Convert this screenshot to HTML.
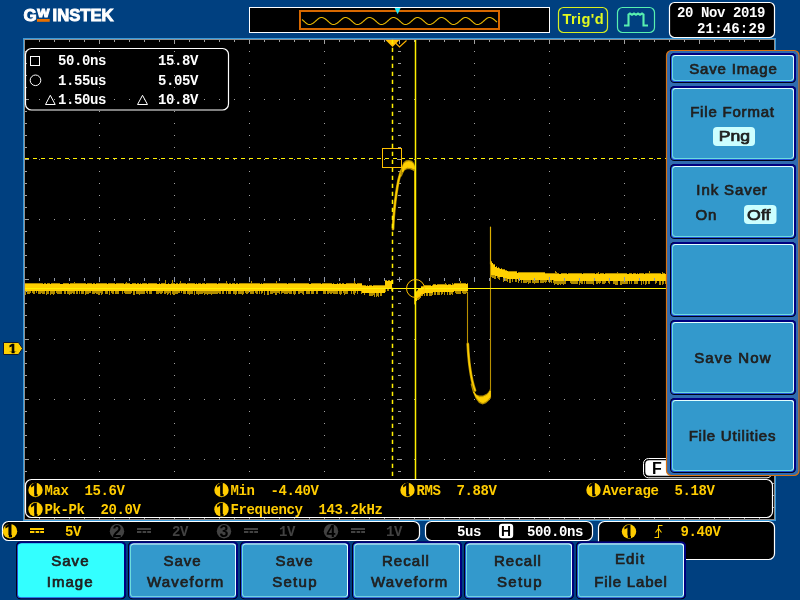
<!DOCTYPE html>
<html lang="en"><head><meta charset="utf-8"><title>GW Instek - Save Image</title>
<style>
html,body{margin:0;padding:0;background:#004080;}
body{width:800px;height:600px;overflow:hidden;position:relative}
svg{position:absolute;left:0;top:0;display:block}
.m{font-family:"Liberation Mono","DejaVu Sans Mono",monospace;font-weight:bold;font-size:14px;letter-spacing:-.4px;white-space:pre}
.s{font-family:"Liberation Sans",sans-serif;font-weight:normal;font-size:15px;fill:#202020;stroke:#202020;stroke-width:.7px}
</style></head><body>
<svg width="800" height="600" viewBox="0 0 800 600" style="will-change:transform">
<rect x="23" y="38" width="753" height="483" fill="#3a9ad9"/>
<rect x="24" y="39" width="751" height="481" fill="#909090"/>
<rect x="25" y="40" width="749" height="479" fill="#000"/>
<g fill="#a0a0a0" shape-rendering="crispEdges"><rect x="99" y="51" width="1" height="1"/><rect x="99" y="63" width="1" height="1"/><rect x="99" y="75" width="1" height="1"/><rect x="99" y="87" width="1" height="1"/><rect x="99" y="99" width="1" height="1"/><rect x="99" y="111" width="1" height="1"/><rect x="99" y="123" width="1" height="1"/><rect x="99" y="135" width="1" height="1"/><rect x="99" y="147" width="1" height="1"/><rect x="99" y="159" width="1" height="1"/><rect x="99" y="171" width="1" height="1"/><rect x="99" y="183" width="1" height="1"/><rect x="99" y="195" width="1" height="1"/><rect x="99" y="207" width="1" height="1"/><rect x="99" y="219" width="1" height="1"/><rect x="99" y="231" width="1" height="1"/><rect x="99" y="243" width="1" height="1"/><rect x="99" y="255" width="1" height="1"/><rect x="99" y="267" width="1" height="1"/><rect x="99" y="279" width="1" height="1"/><rect x="99" y="291" width="1" height="1"/><rect x="99" y="303" width="1" height="1"/><rect x="99" y="315" width="1" height="1"/><rect x="99" y="327" width="1" height="1"/><rect x="99" y="339" width="1" height="1"/><rect x="99" y="351" width="1" height="1"/><rect x="99" y="363" width="1" height="1"/><rect x="99" y="375" width="1" height="1"/><rect x="99" y="387" width="1" height="1"/><rect x="99" y="399" width="1" height="1"/><rect x="99" y="411" width="1" height="1"/><rect x="99" y="423" width="1" height="1"/><rect x="99" y="435" width="1" height="1"/><rect x="99" y="447" width="1" height="1"/><rect x="99" y="459" width="1" height="1"/><rect x="99" y="471" width="1" height="1"/><rect x="99" y="483" width="1" height="1"/><rect x="99" y="495" width="1" height="1"/><rect x="99" y="507" width="1" height="1"/><rect x="174" y="51" width="1" height="1"/><rect x="174" y="63" width="1" height="1"/><rect x="174" y="75" width="1" height="1"/><rect x="174" y="87" width="1" height="1"/><rect x="174" y="99" width="1" height="1"/><rect x="174" y="111" width="1" height="1"/><rect x="174" y="123" width="1" height="1"/><rect x="174" y="135" width="1" height="1"/><rect x="174" y="147" width="1" height="1"/><rect x="174" y="159" width="1" height="1"/><rect x="174" y="171" width="1" height="1"/><rect x="174" y="183" width="1" height="1"/><rect x="174" y="195" width="1" height="1"/><rect x="174" y="207" width="1" height="1"/><rect x="174" y="219" width="1" height="1"/><rect x="174" y="231" width="1" height="1"/><rect x="174" y="243" width="1" height="1"/><rect x="174" y="255" width="1" height="1"/><rect x="174" y="267" width="1" height="1"/><rect x="174" y="279" width="1" height="1"/><rect x="174" y="291" width="1" height="1"/><rect x="174" y="303" width="1" height="1"/><rect x="174" y="315" width="1" height="1"/><rect x="174" y="327" width="1" height="1"/><rect x="174" y="339" width="1" height="1"/><rect x="174" y="351" width="1" height="1"/><rect x="174" y="363" width="1" height="1"/><rect x="174" y="375" width="1" height="1"/><rect x="174" y="387" width="1" height="1"/><rect x="174" y="399" width="1" height="1"/><rect x="174" y="411" width="1" height="1"/><rect x="174" y="423" width="1" height="1"/><rect x="174" y="435" width="1" height="1"/><rect x="174" y="447" width="1" height="1"/><rect x="174" y="459" width="1" height="1"/><rect x="174" y="471" width="1" height="1"/><rect x="174" y="483" width="1" height="1"/><rect x="174" y="495" width="1" height="1"/><rect x="174" y="507" width="1" height="1"/><rect x="249" y="51" width="1" height="1"/><rect x="249" y="63" width="1" height="1"/><rect x="249" y="75" width="1" height="1"/><rect x="249" y="87" width="1" height="1"/><rect x="249" y="99" width="1" height="1"/><rect x="249" y="111" width="1" height="1"/><rect x="249" y="123" width="1" height="1"/><rect x="249" y="135" width="1" height="1"/><rect x="249" y="147" width="1" height="1"/><rect x="249" y="159" width="1" height="1"/><rect x="249" y="171" width="1" height="1"/><rect x="249" y="183" width="1" height="1"/><rect x="249" y="195" width="1" height="1"/><rect x="249" y="207" width="1" height="1"/><rect x="249" y="219" width="1" height="1"/><rect x="249" y="231" width="1" height="1"/><rect x="249" y="243" width="1" height="1"/><rect x="249" y="255" width="1" height="1"/><rect x="249" y="267" width="1" height="1"/><rect x="249" y="279" width="1" height="1"/><rect x="249" y="291" width="1" height="1"/><rect x="249" y="303" width="1" height="1"/><rect x="249" y="315" width="1" height="1"/><rect x="249" y="327" width="1" height="1"/><rect x="249" y="339" width="1" height="1"/><rect x="249" y="351" width="1" height="1"/><rect x="249" y="363" width="1" height="1"/><rect x="249" y="375" width="1" height="1"/><rect x="249" y="387" width="1" height="1"/><rect x="249" y="399" width="1" height="1"/><rect x="249" y="411" width="1" height="1"/><rect x="249" y="423" width="1" height="1"/><rect x="249" y="435" width="1" height="1"/><rect x="249" y="447" width="1" height="1"/><rect x="249" y="459" width="1" height="1"/><rect x="249" y="471" width="1" height="1"/><rect x="249" y="483" width="1" height="1"/><rect x="249" y="495" width="1" height="1"/><rect x="249" y="507" width="1" height="1"/><rect x="324" y="51" width="1" height="1"/><rect x="324" y="63" width="1" height="1"/><rect x="324" y="75" width="1" height="1"/><rect x="324" y="87" width="1" height="1"/><rect x="324" y="99" width="1" height="1"/><rect x="324" y="111" width="1" height="1"/><rect x="324" y="123" width="1" height="1"/><rect x="324" y="135" width="1" height="1"/><rect x="324" y="147" width="1" height="1"/><rect x="324" y="159" width="1" height="1"/><rect x="324" y="171" width="1" height="1"/><rect x="324" y="183" width="1" height="1"/><rect x="324" y="195" width="1" height="1"/><rect x="324" y="207" width="1" height="1"/><rect x="324" y="219" width="1" height="1"/><rect x="324" y="231" width="1" height="1"/><rect x="324" y="243" width="1" height="1"/><rect x="324" y="255" width="1" height="1"/><rect x="324" y="267" width="1" height="1"/><rect x="324" y="279" width="1" height="1"/><rect x="324" y="291" width="1" height="1"/><rect x="324" y="303" width="1" height="1"/><rect x="324" y="315" width="1" height="1"/><rect x="324" y="327" width="1" height="1"/><rect x="324" y="339" width="1" height="1"/><rect x="324" y="351" width="1" height="1"/><rect x="324" y="363" width="1" height="1"/><rect x="324" y="375" width="1" height="1"/><rect x="324" y="387" width="1" height="1"/><rect x="324" y="399" width="1" height="1"/><rect x="324" y="411" width="1" height="1"/><rect x="324" y="423" width="1" height="1"/><rect x="324" y="435" width="1" height="1"/><rect x="324" y="447" width="1" height="1"/><rect x="324" y="459" width="1" height="1"/><rect x="324" y="471" width="1" height="1"/><rect x="324" y="483" width="1" height="1"/><rect x="324" y="495" width="1" height="1"/><rect x="324" y="507" width="1" height="1"/><rect x="474" y="51" width="1" height="1"/><rect x="474" y="63" width="1" height="1"/><rect x="474" y="75" width="1" height="1"/><rect x="474" y="87" width="1" height="1"/><rect x="474" y="99" width="1" height="1"/><rect x="474" y="111" width="1" height="1"/><rect x="474" y="123" width="1" height="1"/><rect x="474" y="135" width="1" height="1"/><rect x="474" y="147" width="1" height="1"/><rect x="474" y="159" width="1" height="1"/><rect x="474" y="171" width="1" height="1"/><rect x="474" y="183" width="1" height="1"/><rect x="474" y="195" width="1" height="1"/><rect x="474" y="207" width="1" height="1"/><rect x="474" y="219" width="1" height="1"/><rect x="474" y="231" width="1" height="1"/><rect x="474" y="243" width="1" height="1"/><rect x="474" y="255" width="1" height="1"/><rect x="474" y="267" width="1" height="1"/><rect x="474" y="279" width="1" height="1"/><rect x="474" y="291" width="1" height="1"/><rect x="474" y="303" width="1" height="1"/><rect x="474" y="315" width="1" height="1"/><rect x="474" y="327" width="1" height="1"/><rect x="474" y="339" width="1" height="1"/><rect x="474" y="351" width="1" height="1"/><rect x="474" y="363" width="1" height="1"/><rect x="474" y="375" width="1" height="1"/><rect x="474" y="387" width="1" height="1"/><rect x="474" y="399" width="1" height="1"/><rect x="474" y="411" width="1" height="1"/><rect x="474" y="423" width="1" height="1"/><rect x="474" y="435" width="1" height="1"/><rect x="474" y="447" width="1" height="1"/><rect x="474" y="459" width="1" height="1"/><rect x="474" y="471" width="1" height="1"/><rect x="474" y="483" width="1" height="1"/><rect x="474" y="495" width="1" height="1"/><rect x="474" y="507" width="1" height="1"/><rect x="549" y="51" width="1" height="1"/><rect x="549" y="63" width="1" height="1"/><rect x="549" y="75" width="1" height="1"/><rect x="549" y="87" width="1" height="1"/><rect x="549" y="99" width="1" height="1"/><rect x="549" y="111" width="1" height="1"/><rect x="549" y="123" width="1" height="1"/><rect x="549" y="135" width="1" height="1"/><rect x="549" y="147" width="1" height="1"/><rect x="549" y="159" width="1" height="1"/><rect x="549" y="171" width="1" height="1"/><rect x="549" y="183" width="1" height="1"/><rect x="549" y="195" width="1" height="1"/><rect x="549" y="207" width="1" height="1"/><rect x="549" y="219" width="1" height="1"/><rect x="549" y="231" width="1" height="1"/><rect x="549" y="243" width="1" height="1"/><rect x="549" y="255" width="1" height="1"/><rect x="549" y="267" width="1" height="1"/><rect x="549" y="279" width="1" height="1"/><rect x="549" y="291" width="1" height="1"/><rect x="549" y="303" width="1" height="1"/><rect x="549" y="315" width="1" height="1"/><rect x="549" y="327" width="1" height="1"/><rect x="549" y="339" width="1" height="1"/><rect x="549" y="351" width="1" height="1"/><rect x="549" y="363" width="1" height="1"/><rect x="549" y="375" width="1" height="1"/><rect x="549" y="387" width="1" height="1"/><rect x="549" y="399" width="1" height="1"/><rect x="549" y="411" width="1" height="1"/><rect x="549" y="423" width="1" height="1"/><rect x="549" y="435" width="1" height="1"/><rect x="549" y="447" width="1" height="1"/><rect x="549" y="459" width="1" height="1"/><rect x="549" y="471" width="1" height="1"/><rect x="549" y="483" width="1" height="1"/><rect x="549" y="495" width="1" height="1"/><rect x="549" y="507" width="1" height="1"/><rect x="624" y="51" width="1" height="1"/><rect x="624" y="63" width="1" height="1"/><rect x="624" y="75" width="1" height="1"/><rect x="624" y="87" width="1" height="1"/><rect x="624" y="99" width="1" height="1"/><rect x="624" y="111" width="1" height="1"/><rect x="624" y="123" width="1" height="1"/><rect x="624" y="135" width="1" height="1"/><rect x="624" y="147" width="1" height="1"/><rect x="624" y="159" width="1" height="1"/><rect x="624" y="171" width="1" height="1"/><rect x="624" y="183" width="1" height="1"/><rect x="624" y="195" width="1" height="1"/><rect x="624" y="207" width="1" height="1"/><rect x="624" y="219" width="1" height="1"/><rect x="624" y="231" width="1" height="1"/><rect x="624" y="243" width="1" height="1"/><rect x="624" y="255" width="1" height="1"/><rect x="624" y="267" width="1" height="1"/><rect x="624" y="279" width="1" height="1"/><rect x="624" y="291" width="1" height="1"/><rect x="624" y="303" width="1" height="1"/><rect x="624" y="315" width="1" height="1"/><rect x="624" y="327" width="1" height="1"/><rect x="624" y="339" width="1" height="1"/><rect x="624" y="351" width="1" height="1"/><rect x="624" y="363" width="1" height="1"/><rect x="624" y="375" width="1" height="1"/><rect x="624" y="387" width="1" height="1"/><rect x="624" y="399" width="1" height="1"/><rect x="624" y="411" width="1" height="1"/><rect x="624" y="423" width="1" height="1"/><rect x="624" y="435" width="1" height="1"/><rect x="624" y="447" width="1" height="1"/><rect x="624" y="459" width="1" height="1"/><rect x="624" y="471" width="1" height="1"/><rect x="624" y="483" width="1" height="1"/><rect x="624" y="495" width="1" height="1"/><rect x="624" y="507" width="1" height="1"/><rect x="699" y="51" width="1" height="1"/><rect x="699" y="63" width="1" height="1"/><rect x="699" y="75" width="1" height="1"/><rect x="699" y="87" width="1" height="1"/><rect x="699" y="99" width="1" height="1"/><rect x="699" y="111" width="1" height="1"/><rect x="699" y="123" width="1" height="1"/><rect x="699" y="135" width="1" height="1"/><rect x="699" y="147" width="1" height="1"/><rect x="699" y="159" width="1" height="1"/><rect x="699" y="171" width="1" height="1"/><rect x="699" y="183" width="1" height="1"/><rect x="699" y="195" width="1" height="1"/><rect x="699" y="207" width="1" height="1"/><rect x="699" y="219" width="1" height="1"/><rect x="699" y="231" width="1" height="1"/><rect x="699" y="243" width="1" height="1"/><rect x="699" y="255" width="1" height="1"/><rect x="699" y="267" width="1" height="1"/><rect x="699" y="279" width="1" height="1"/><rect x="699" y="291" width="1" height="1"/><rect x="699" y="303" width="1" height="1"/><rect x="699" y="315" width="1" height="1"/><rect x="699" y="327" width="1" height="1"/><rect x="699" y="339" width="1" height="1"/><rect x="699" y="351" width="1" height="1"/><rect x="699" y="363" width="1" height="1"/><rect x="699" y="375" width="1" height="1"/><rect x="699" y="387" width="1" height="1"/><rect x="699" y="399" width="1" height="1"/><rect x="699" y="411" width="1" height="1"/><rect x="699" y="423" width="1" height="1"/><rect x="699" y="435" width="1" height="1"/><rect x="699" y="447" width="1" height="1"/><rect x="699" y="459" width="1" height="1"/><rect x="699" y="471" width="1" height="1"/><rect x="699" y="483" width="1" height="1"/><rect x="699" y="495" width="1" height="1"/><rect x="699" y="507" width="1" height="1"/><rect x="39" y="99" width="1" height="1"/><rect x="54" y="99" width="1" height="1"/><rect x="69" y="99" width="1" height="1"/><rect x="84" y="99" width="1" height="1"/><rect x="99" y="99" width="1" height="1"/><rect x="114" y="99" width="1" height="1"/><rect x="129" y="99" width="1" height="1"/><rect x="144" y="99" width="1" height="1"/><rect x="159" y="99" width="1" height="1"/><rect x="174" y="99" width="1" height="1"/><rect x="189" y="99" width="1" height="1"/><rect x="204" y="99" width="1" height="1"/><rect x="219" y="99" width="1" height="1"/><rect x="234" y="99" width="1" height="1"/><rect x="249" y="99" width="1" height="1"/><rect x="264" y="99" width="1" height="1"/><rect x="279" y="99" width="1" height="1"/><rect x="294" y="99" width="1" height="1"/><rect x="309" y="99" width="1" height="1"/><rect x="324" y="99" width="1" height="1"/><rect x="339" y="99" width="1" height="1"/><rect x="354" y="99" width="1" height="1"/><rect x="369" y="99" width="1" height="1"/><rect x="384" y="99" width="1" height="1"/><rect x="399" y="99" width="1" height="1"/><rect x="414" y="99" width="1" height="1"/><rect x="429" y="99" width="1" height="1"/><rect x="444" y="99" width="1" height="1"/><rect x="459" y="99" width="1" height="1"/><rect x="474" y="99" width="1" height="1"/><rect x="489" y="99" width="1" height="1"/><rect x="504" y="99" width="1" height="1"/><rect x="519" y="99" width="1" height="1"/><rect x="534" y="99" width="1" height="1"/><rect x="549" y="99" width="1" height="1"/><rect x="564" y="99" width="1" height="1"/><rect x="579" y="99" width="1" height="1"/><rect x="594" y="99" width="1" height="1"/><rect x="609" y="99" width="1" height="1"/><rect x="624" y="99" width="1" height="1"/><rect x="639" y="99" width="1" height="1"/><rect x="654" y="99" width="1" height="1"/><rect x="669" y="99" width="1" height="1"/><rect x="684" y="99" width="1" height="1"/><rect x="699" y="99" width="1" height="1"/><rect x="714" y="99" width="1" height="1"/><rect x="729" y="99" width="1" height="1"/><rect x="744" y="99" width="1" height="1"/><rect x="759" y="99" width="1" height="1"/><rect x="39" y="159" width="1" height="1"/><rect x="54" y="159" width="1" height="1"/><rect x="69" y="159" width="1" height="1"/><rect x="84" y="159" width="1" height="1"/><rect x="99" y="159" width="1" height="1"/><rect x="114" y="159" width="1" height="1"/><rect x="129" y="159" width="1" height="1"/><rect x="144" y="159" width="1" height="1"/><rect x="159" y="159" width="1" height="1"/><rect x="174" y="159" width="1" height="1"/><rect x="189" y="159" width="1" height="1"/><rect x="204" y="159" width="1" height="1"/><rect x="219" y="159" width="1" height="1"/><rect x="234" y="159" width="1" height="1"/><rect x="249" y="159" width="1" height="1"/><rect x="264" y="159" width="1" height="1"/><rect x="279" y="159" width="1" height="1"/><rect x="294" y="159" width="1" height="1"/><rect x="309" y="159" width="1" height="1"/><rect x="324" y="159" width="1" height="1"/><rect x="339" y="159" width="1" height="1"/><rect x="354" y="159" width="1" height="1"/><rect x="369" y="159" width="1" height="1"/><rect x="384" y="159" width="1" height="1"/><rect x="399" y="159" width="1" height="1"/><rect x="414" y="159" width="1" height="1"/><rect x="429" y="159" width="1" height="1"/><rect x="444" y="159" width="1" height="1"/><rect x="459" y="159" width="1" height="1"/><rect x="474" y="159" width="1" height="1"/><rect x="489" y="159" width="1" height="1"/><rect x="504" y="159" width="1" height="1"/><rect x="519" y="159" width="1" height="1"/><rect x="534" y="159" width="1" height="1"/><rect x="549" y="159" width="1" height="1"/><rect x="564" y="159" width="1" height="1"/><rect x="579" y="159" width="1" height="1"/><rect x="594" y="159" width="1" height="1"/><rect x="609" y="159" width="1" height="1"/><rect x="624" y="159" width="1" height="1"/><rect x="639" y="159" width="1" height="1"/><rect x="654" y="159" width="1" height="1"/><rect x="669" y="159" width="1" height="1"/><rect x="684" y="159" width="1" height="1"/><rect x="699" y="159" width="1" height="1"/><rect x="714" y="159" width="1" height="1"/><rect x="729" y="159" width="1" height="1"/><rect x="744" y="159" width="1" height="1"/><rect x="759" y="159" width="1" height="1"/><rect x="39" y="219" width="1" height="1"/><rect x="54" y="219" width="1" height="1"/><rect x="69" y="219" width="1" height="1"/><rect x="84" y="219" width="1" height="1"/><rect x="99" y="219" width="1" height="1"/><rect x="114" y="219" width="1" height="1"/><rect x="129" y="219" width="1" height="1"/><rect x="144" y="219" width="1" height="1"/><rect x="159" y="219" width="1" height="1"/><rect x="174" y="219" width="1" height="1"/><rect x="189" y="219" width="1" height="1"/><rect x="204" y="219" width="1" height="1"/><rect x="219" y="219" width="1" height="1"/><rect x="234" y="219" width="1" height="1"/><rect x="249" y="219" width="1" height="1"/><rect x="264" y="219" width="1" height="1"/><rect x="279" y="219" width="1" height="1"/><rect x="294" y="219" width="1" height="1"/><rect x="309" y="219" width="1" height="1"/><rect x="324" y="219" width="1" height="1"/><rect x="339" y="219" width="1" height="1"/><rect x="354" y="219" width="1" height="1"/><rect x="369" y="219" width="1" height="1"/><rect x="384" y="219" width="1" height="1"/><rect x="399" y="219" width="1" height="1"/><rect x="414" y="219" width="1" height="1"/><rect x="429" y="219" width="1" height="1"/><rect x="444" y="219" width="1" height="1"/><rect x="459" y="219" width="1" height="1"/><rect x="474" y="219" width="1" height="1"/><rect x="489" y="219" width="1" height="1"/><rect x="504" y="219" width="1" height="1"/><rect x="519" y="219" width="1" height="1"/><rect x="534" y="219" width="1" height="1"/><rect x="549" y="219" width="1" height="1"/><rect x="564" y="219" width="1" height="1"/><rect x="579" y="219" width="1" height="1"/><rect x="594" y="219" width="1" height="1"/><rect x="609" y="219" width="1" height="1"/><rect x="624" y="219" width="1" height="1"/><rect x="639" y="219" width="1" height="1"/><rect x="654" y="219" width="1" height="1"/><rect x="669" y="219" width="1" height="1"/><rect x="684" y="219" width="1" height="1"/><rect x="699" y="219" width="1" height="1"/><rect x="714" y="219" width="1" height="1"/><rect x="729" y="219" width="1" height="1"/><rect x="744" y="219" width="1" height="1"/><rect x="759" y="219" width="1" height="1"/><rect x="39" y="339" width="1" height="1"/><rect x="54" y="339" width="1" height="1"/><rect x="69" y="339" width="1" height="1"/><rect x="84" y="339" width="1" height="1"/><rect x="99" y="339" width="1" height="1"/><rect x="114" y="339" width="1" height="1"/><rect x="129" y="339" width="1" height="1"/><rect x="144" y="339" width="1" height="1"/><rect x="159" y="339" width="1" height="1"/><rect x="174" y="339" width="1" height="1"/><rect x="189" y="339" width="1" height="1"/><rect x="204" y="339" width="1" height="1"/><rect x="219" y="339" width="1" height="1"/><rect x="234" y="339" width="1" height="1"/><rect x="249" y="339" width="1" height="1"/><rect x="264" y="339" width="1" height="1"/><rect x="279" y="339" width="1" height="1"/><rect x="294" y="339" width="1" height="1"/><rect x="309" y="339" width="1" height="1"/><rect x="324" y="339" width="1" height="1"/><rect x="339" y="339" width="1" height="1"/><rect x="354" y="339" width="1" height="1"/><rect x="369" y="339" width="1" height="1"/><rect x="384" y="339" width="1" height="1"/><rect x="399" y="339" width="1" height="1"/><rect x="414" y="339" width="1" height="1"/><rect x="429" y="339" width="1" height="1"/><rect x="444" y="339" width="1" height="1"/><rect x="459" y="339" width="1" height="1"/><rect x="474" y="339" width="1" height="1"/><rect x="489" y="339" width="1" height="1"/><rect x="504" y="339" width="1" height="1"/><rect x="519" y="339" width="1" height="1"/><rect x="534" y="339" width="1" height="1"/><rect x="549" y="339" width="1" height="1"/><rect x="564" y="339" width="1" height="1"/><rect x="579" y="339" width="1" height="1"/><rect x="594" y="339" width="1" height="1"/><rect x="609" y="339" width="1" height="1"/><rect x="624" y="339" width="1" height="1"/><rect x="639" y="339" width="1" height="1"/><rect x="654" y="339" width="1" height="1"/><rect x="669" y="339" width="1" height="1"/><rect x="684" y="339" width="1" height="1"/><rect x="699" y="339" width="1" height="1"/><rect x="714" y="339" width="1" height="1"/><rect x="729" y="339" width="1" height="1"/><rect x="744" y="339" width="1" height="1"/><rect x="759" y="339" width="1" height="1"/><rect x="39" y="399" width="1" height="1"/><rect x="54" y="399" width="1" height="1"/><rect x="69" y="399" width="1" height="1"/><rect x="84" y="399" width="1" height="1"/><rect x="99" y="399" width="1" height="1"/><rect x="114" y="399" width="1" height="1"/><rect x="129" y="399" width="1" height="1"/><rect x="144" y="399" width="1" height="1"/><rect x="159" y="399" width="1" height="1"/><rect x="174" y="399" width="1" height="1"/><rect x="189" y="399" width="1" height="1"/><rect x="204" y="399" width="1" height="1"/><rect x="219" y="399" width="1" height="1"/><rect x="234" y="399" width="1" height="1"/><rect x="249" y="399" width="1" height="1"/><rect x="264" y="399" width="1" height="1"/><rect x="279" y="399" width="1" height="1"/><rect x="294" y="399" width="1" height="1"/><rect x="309" y="399" width="1" height="1"/><rect x="324" y="399" width="1" height="1"/><rect x="339" y="399" width="1" height="1"/><rect x="354" y="399" width="1" height="1"/><rect x="369" y="399" width="1" height="1"/><rect x="384" y="399" width="1" height="1"/><rect x="399" y="399" width="1" height="1"/><rect x="414" y="399" width="1" height="1"/><rect x="429" y="399" width="1" height="1"/><rect x="444" y="399" width="1" height="1"/><rect x="459" y="399" width="1" height="1"/><rect x="474" y="399" width="1" height="1"/><rect x="489" y="399" width="1" height="1"/><rect x="504" y="399" width="1" height="1"/><rect x="519" y="399" width="1" height="1"/><rect x="534" y="399" width="1" height="1"/><rect x="549" y="399" width="1" height="1"/><rect x="564" y="399" width="1" height="1"/><rect x="579" y="399" width="1" height="1"/><rect x="594" y="399" width="1" height="1"/><rect x="609" y="399" width="1" height="1"/><rect x="624" y="399" width="1" height="1"/><rect x="639" y="399" width="1" height="1"/><rect x="654" y="399" width="1" height="1"/><rect x="669" y="399" width="1" height="1"/><rect x="684" y="399" width="1" height="1"/><rect x="699" y="399" width="1" height="1"/><rect x="714" y="399" width="1" height="1"/><rect x="729" y="399" width="1" height="1"/><rect x="744" y="399" width="1" height="1"/><rect x="759" y="399" width="1" height="1"/><rect x="39" y="459" width="1" height="1"/><rect x="54" y="459" width="1" height="1"/><rect x="69" y="459" width="1" height="1"/><rect x="84" y="459" width="1" height="1"/><rect x="99" y="459" width="1" height="1"/><rect x="114" y="459" width="1" height="1"/><rect x="129" y="459" width="1" height="1"/><rect x="144" y="459" width="1" height="1"/><rect x="159" y="459" width="1" height="1"/><rect x="174" y="459" width="1" height="1"/><rect x="189" y="459" width="1" height="1"/><rect x="204" y="459" width="1" height="1"/><rect x="219" y="459" width="1" height="1"/><rect x="234" y="459" width="1" height="1"/><rect x="249" y="459" width="1" height="1"/><rect x="264" y="459" width="1" height="1"/><rect x="279" y="459" width="1" height="1"/><rect x="294" y="459" width="1" height="1"/><rect x="309" y="459" width="1" height="1"/><rect x="324" y="459" width="1" height="1"/><rect x="339" y="459" width="1" height="1"/><rect x="354" y="459" width="1" height="1"/><rect x="369" y="459" width="1" height="1"/><rect x="384" y="459" width="1" height="1"/><rect x="399" y="459" width="1" height="1"/><rect x="414" y="459" width="1" height="1"/><rect x="429" y="459" width="1" height="1"/><rect x="444" y="459" width="1" height="1"/><rect x="459" y="459" width="1" height="1"/><rect x="474" y="459" width="1" height="1"/><rect x="489" y="459" width="1" height="1"/><rect x="504" y="459" width="1" height="1"/><rect x="519" y="459" width="1" height="1"/><rect x="534" y="459" width="1" height="1"/><rect x="549" y="459" width="1" height="1"/><rect x="564" y="459" width="1" height="1"/><rect x="579" y="459" width="1" height="1"/><rect x="594" y="459" width="1" height="1"/><rect x="609" y="459" width="1" height="1"/><rect x="624" y="459" width="1" height="1"/><rect x="639" y="459" width="1" height="1"/><rect x="654" y="459" width="1" height="1"/><rect x="669" y="459" width="1" height="1"/><rect x="684" y="459" width="1" height="1"/><rect x="699" y="459" width="1" height="1"/><rect x="714" y="459" width="1" height="1"/><rect x="729" y="459" width="1" height="1"/><rect x="744" y="459" width="1" height="1"/><rect x="759" y="459" width="1" height="1"/><rect x="39" y="278" width="1" height="3"/><rect x="54" y="278" width="1" height="3"/><rect x="69" y="278" width="1" height="3"/><rect x="84" y="278" width="1" height="3"/><rect x="99" y="277" width="1" height="5"/><rect x="114" y="278" width="1" height="3"/><rect x="129" y="278" width="1" height="3"/><rect x="144" y="278" width="1" height="3"/><rect x="159" y="278" width="1" height="3"/><rect x="174" y="277" width="1" height="5"/><rect x="189" y="278" width="1" height="3"/><rect x="204" y="278" width="1" height="3"/><rect x="219" y="278" width="1" height="3"/><rect x="234" y="278" width="1" height="3"/><rect x="249" y="277" width="1" height="5"/><rect x="264" y="278" width="1" height="3"/><rect x="279" y="278" width="1" height="3"/><rect x="294" y="278" width="1" height="3"/><rect x="309" y="278" width="1" height="3"/><rect x="324" y="277" width="1" height="5"/><rect x="339" y="278" width="1" height="3"/><rect x="354" y="278" width="1" height="3"/><rect x="369" y="278" width="1" height="3"/><rect x="384" y="278" width="1" height="3"/><rect x="399" y="277" width="1" height="5"/><rect x="414" y="278" width="1" height="3"/><rect x="429" y="278" width="1" height="3"/><rect x="444" y="278" width="1" height="3"/><rect x="459" y="278" width="1" height="3"/><rect x="474" y="277" width="1" height="5"/><rect x="489" y="278" width="1" height="3"/><rect x="504" y="278" width="1" height="3"/><rect x="519" y="278" width="1" height="3"/><rect x="534" y="278" width="1" height="3"/><rect x="549" y="277" width="1" height="5"/><rect x="564" y="278" width="1" height="3"/><rect x="579" y="278" width="1" height="3"/><rect x="594" y="278" width="1" height="3"/><rect x="609" y="278" width="1" height="3"/><rect x="624" y="277" width="1" height="5"/><rect x="639" y="278" width="1" height="3"/><rect x="654" y="278" width="1" height="3"/><rect x="669" y="278" width="1" height="3"/><rect x="684" y="278" width="1" height="3"/><rect x="699" y="277" width="1" height="5"/><rect x="714" y="278" width="1" height="3"/><rect x="729" y="278" width="1" height="3"/><rect x="744" y="278" width="1" height="3"/><rect x="759" y="278" width="1" height="3"/><rect x="398" y="51" width="3" height="1"/><rect x="398" y="63" width="3" height="1"/><rect x="398" y="75" width="3" height="1"/><rect x="398" y="87" width="3" height="1"/><rect x="397" y="99" width="5" height="1"/><rect x="398" y="111" width="3" height="1"/><rect x="398" y="123" width="3" height="1"/><rect x="398" y="135" width="3" height="1"/><rect x="398" y="147" width="3" height="1"/><rect x="397" y="159" width="5" height="1"/><rect x="398" y="171" width="3" height="1"/><rect x="398" y="183" width="3" height="1"/><rect x="398" y="195" width="3" height="1"/><rect x="398" y="207" width="3" height="1"/><rect x="397" y="219" width="5" height="1"/><rect x="398" y="231" width="3" height="1"/><rect x="398" y="243" width="3" height="1"/><rect x="398" y="255" width="3" height="1"/><rect x="398" y="267" width="3" height="1"/><rect x="397" y="279" width="5" height="1"/><rect x="398" y="291" width="3" height="1"/><rect x="398" y="303" width="3" height="1"/><rect x="398" y="315" width="3" height="1"/><rect x="398" y="327" width="3" height="1"/><rect x="397" y="339" width="5" height="1"/><rect x="398" y="351" width="3" height="1"/><rect x="398" y="363" width="3" height="1"/><rect x="398" y="375" width="3" height="1"/><rect x="398" y="387" width="3" height="1"/><rect x="397" y="399" width="5" height="1"/><rect x="398" y="411" width="3" height="1"/><rect x="398" y="423" width="3" height="1"/><rect x="398" y="435" width="3" height="1"/><rect x="398" y="447" width="3" height="1"/><rect x="397" y="459" width="5" height="1"/><rect x="398" y="471" width="3" height="1"/><rect x="398" y="483" width="3" height="1"/><rect x="398" y="495" width="3" height="1"/><rect x="398" y="507" width="3" height="1"/><rect x="39" y="40" width="1" height="2"/><rect x="39" y="517" width="1" height="2"/><rect x="54" y="40" width="1" height="2"/><rect x="54" y="517" width="1" height="2"/><rect x="69" y="40" width="1" height="2"/><rect x="69" y="517" width="1" height="2"/><rect x="84" y="40" width="1" height="2"/><rect x="84" y="517" width="1" height="2"/><rect x="99" y="40" width="1" height="4"/><rect x="99" y="515" width="1" height="4"/><rect x="114" y="40" width="1" height="2"/><rect x="114" y="517" width="1" height="2"/><rect x="129" y="40" width="1" height="2"/><rect x="129" y="517" width="1" height="2"/><rect x="144" y="40" width="1" height="2"/><rect x="144" y="517" width="1" height="2"/><rect x="159" y="40" width="1" height="2"/><rect x="159" y="517" width="1" height="2"/><rect x="174" y="40" width="1" height="4"/><rect x="174" y="515" width="1" height="4"/><rect x="189" y="40" width="1" height="2"/><rect x="189" y="517" width="1" height="2"/><rect x="204" y="40" width="1" height="2"/><rect x="204" y="517" width="1" height="2"/><rect x="219" y="40" width="1" height="2"/><rect x="219" y="517" width="1" height="2"/><rect x="234" y="40" width="1" height="2"/><rect x="234" y="517" width="1" height="2"/><rect x="249" y="40" width="1" height="4"/><rect x="249" y="515" width="1" height="4"/><rect x="264" y="40" width="1" height="2"/><rect x="264" y="517" width="1" height="2"/><rect x="279" y="40" width="1" height="2"/><rect x="279" y="517" width="1" height="2"/><rect x="294" y="40" width="1" height="2"/><rect x="294" y="517" width="1" height="2"/><rect x="309" y="40" width="1" height="2"/><rect x="309" y="517" width="1" height="2"/><rect x="324" y="40" width="1" height="4"/><rect x="324" y="515" width="1" height="4"/><rect x="339" y="40" width="1" height="2"/><rect x="339" y="517" width="1" height="2"/><rect x="354" y="40" width="1" height="2"/><rect x="354" y="517" width="1" height="2"/><rect x="369" y="40" width="1" height="2"/><rect x="369" y="517" width="1" height="2"/><rect x="384" y="40" width="1" height="2"/><rect x="384" y="517" width="1" height="2"/><rect x="399" y="40" width="1" height="4"/><rect x="399" y="515" width="1" height="4"/><rect x="414" y="40" width="1" height="2"/><rect x="414" y="517" width="1" height="2"/><rect x="429" y="40" width="1" height="2"/><rect x="429" y="517" width="1" height="2"/><rect x="444" y="40" width="1" height="2"/><rect x="444" y="517" width="1" height="2"/><rect x="459" y="40" width="1" height="2"/><rect x="459" y="517" width="1" height="2"/><rect x="474" y="40" width="1" height="4"/><rect x="474" y="515" width="1" height="4"/><rect x="489" y="40" width="1" height="2"/><rect x="489" y="517" width="1" height="2"/><rect x="504" y="40" width="1" height="2"/><rect x="504" y="517" width="1" height="2"/><rect x="519" y="40" width="1" height="2"/><rect x="519" y="517" width="1" height="2"/><rect x="534" y="40" width="1" height="2"/><rect x="534" y="517" width="1" height="2"/><rect x="549" y="40" width="1" height="4"/><rect x="549" y="515" width="1" height="4"/><rect x="564" y="40" width="1" height="2"/><rect x="564" y="517" width="1" height="2"/><rect x="579" y="40" width="1" height="2"/><rect x="579" y="517" width="1" height="2"/><rect x="594" y="40" width="1" height="2"/><rect x="594" y="517" width="1" height="2"/><rect x="609" y="40" width="1" height="2"/><rect x="609" y="517" width="1" height="2"/><rect x="624" y="40" width="1" height="4"/><rect x="624" y="515" width="1" height="4"/><rect x="639" y="40" width="1" height="2"/><rect x="639" y="517" width="1" height="2"/><rect x="654" y="40" width="1" height="2"/><rect x="654" y="517" width="1" height="2"/><rect x="669" y="40" width="1" height="2"/><rect x="669" y="517" width="1" height="2"/><rect x="684" y="40" width="1" height="2"/><rect x="684" y="517" width="1" height="2"/><rect x="699" y="40" width="1" height="4"/><rect x="699" y="515" width="1" height="4"/><rect x="714" y="40" width="1" height="2"/><rect x="714" y="517" width="1" height="2"/><rect x="729" y="40" width="1" height="2"/><rect x="729" y="517" width="1" height="2"/><rect x="744" y="40" width="1" height="2"/><rect x="744" y="517" width="1" height="2"/><rect x="759" y="40" width="1" height="2"/><rect x="759" y="517" width="1" height="2"/><rect x="25" y="51" width="2" height="1"/><rect x="772" y="51" width="2" height="1"/><rect x="25" y="63" width="2" height="1"/><rect x="772" y="63" width="2" height="1"/><rect x="25" y="75" width="2" height="1"/><rect x="772" y="75" width="2" height="1"/><rect x="25" y="87" width="2" height="1"/><rect x="772" y="87" width="2" height="1"/><rect x="25" y="99" width="4" height="1"/><rect x="770" y="99" width="4" height="1"/><rect x="25" y="111" width="2" height="1"/><rect x="772" y="111" width="2" height="1"/><rect x="25" y="123" width="2" height="1"/><rect x="772" y="123" width="2" height="1"/><rect x="25" y="135" width="2" height="1"/><rect x="772" y="135" width="2" height="1"/><rect x="25" y="147" width="2" height="1"/><rect x="772" y="147" width="2" height="1"/><rect x="25" y="159" width="4" height="1"/><rect x="770" y="159" width="4" height="1"/><rect x="25" y="171" width="2" height="1"/><rect x="772" y="171" width="2" height="1"/><rect x="25" y="183" width="2" height="1"/><rect x="772" y="183" width="2" height="1"/><rect x="25" y="195" width="2" height="1"/><rect x="772" y="195" width="2" height="1"/><rect x="25" y="207" width="2" height="1"/><rect x="772" y="207" width="2" height="1"/><rect x="25" y="219" width="4" height="1"/><rect x="770" y="219" width="4" height="1"/><rect x="25" y="231" width="2" height="1"/><rect x="772" y="231" width="2" height="1"/><rect x="25" y="243" width="2" height="1"/><rect x="772" y="243" width="2" height="1"/><rect x="25" y="255" width="2" height="1"/><rect x="772" y="255" width="2" height="1"/><rect x="25" y="267" width="2" height="1"/><rect x="772" y="267" width="2" height="1"/><rect x="25" y="279" width="4" height="1"/><rect x="770" y="279" width="4" height="1"/><rect x="25" y="291" width="2" height="1"/><rect x="772" y="291" width="2" height="1"/><rect x="25" y="303" width="2" height="1"/><rect x="772" y="303" width="2" height="1"/><rect x="25" y="315" width="2" height="1"/><rect x="772" y="315" width="2" height="1"/><rect x="25" y="327" width="2" height="1"/><rect x="772" y="327" width="2" height="1"/><rect x="25" y="339" width="4" height="1"/><rect x="770" y="339" width="4" height="1"/><rect x="25" y="351" width="2" height="1"/><rect x="772" y="351" width="2" height="1"/><rect x="25" y="363" width="2" height="1"/><rect x="772" y="363" width="2" height="1"/><rect x="25" y="375" width="2" height="1"/><rect x="772" y="375" width="2" height="1"/><rect x="25" y="387" width="2" height="1"/><rect x="772" y="387" width="2" height="1"/><rect x="25" y="399" width="4" height="1"/><rect x="770" y="399" width="4" height="1"/><rect x="25" y="411" width="2" height="1"/><rect x="772" y="411" width="2" height="1"/><rect x="25" y="423" width="2" height="1"/><rect x="772" y="423" width="2" height="1"/><rect x="25" y="435" width="2" height="1"/><rect x="772" y="435" width="2" height="1"/><rect x="25" y="447" width="2" height="1"/><rect x="772" y="447" width="2" height="1"/><rect x="25" y="459" width="4" height="1"/><rect x="770" y="459" width="4" height="1"/><rect x="25" y="471" width="2" height="1"/><rect x="772" y="471" width="2" height="1"/><rect x="25" y="483" width="2" height="1"/><rect x="772" y="483" width="2" height="1"/><rect x="25" y="495" width="2" height="1"/><rect x="772" y="495" width="2" height="1"/><rect x="25" y="507" width="2" height="1"/><rect x="772" y="507" width="2" height="1"/></g>
<g shape-rendering="crispEdges" fill="none" stroke-width="1"><path transform="translate(.5 0)" stroke="#b08c00" d="M25 283V295M26 283V291M27 283V294M28 283V294M29 283V294M30 283V293M31 283V291M32 283V293M33 283V294M34 283V294M35 283V291M36 283V293M37 283V291M38 283V294M39 283V294M40 283V294M41 283V293M42 283V294M43 284V294M44 283V294M45 283V291M46 284V295M47 283V294M48 283V294M49 283V291M50 284V295M51 283V294M52 283V294M53 283V295M54 283V294M55 283V291M56 283V293M57 283V294M58 283V294M59 283V294M60 284V294M61 284V294M62 284V291M63 283V291M64 283V294M65 283V294M66 283V291M67 283V294M68 283V294M69 284V295M70 283V294M71 283V294M72 283V293M73 283V294M74 282V294M75 283V291M76 283V294M77 283V294M78 283V291M79 283V294M80 283V291M81 283V294M82 283V294M83 283V294M84 283V291M85 283V295M86 284V294M87 283V294M88 283V294M89 283V293M90 283V293M91 283V291M92 284V294M93 283V294M94 283V294M95 284V293M96 283V294M97 283V294M98 283V295M99 283V295M100 283V293M101 283V295M102 283V294M103 283V291M104 283V291M105 283V294M106 283V294M107 284V294M108 283V291M109 283V295M110 283V291M111 283V293M112 283V294M113 283V294M114 283V291M115 284V294M116 283V294M117 283V294M118 283V294M119 283V291M120 283V291M121 283V291M122 283V294M123 283V291M124 284V293M125 283V294M126 282V294M127 283V294M128 283V294M129 283V294M130 284V294M131 284V293M132 283V291M133 283V295M134 283V295M135 283V291M136 284V294M137 283V294M138 283V294M139 284V295M140 283V294M141 284V294M142 283V294M143 283V294M144 283V294M145 283V291M146 283V293M147 284V294M148 283V291M149 283V294M150 283V294M151 283V294M152 283V291M153 283V291M154 283V291M155 283V291M156 283V294M157 284V294M158 284V294M159 283V293M160 284V294M161 283V294M162 283V293M163 283V291M164 283V294M165 280V294M166 284V293M167 284V295M168 283V294M169 284V293M170 284V295M171 283V291M172 280V294M173 283V295M174 283V295M175 284V294M176 283V294M177 283V294M178 284V293M179 283V293M180 281V291M181 283V293M182 283V291M183 283V294M184 283V294M185 283V294M186 284V291M187 283V294M188 283V294M189 283V295M190 283V294M191 283V294M192 283V294M193 283V291M194 283V295M195 284V291M196 283V294M197 284V294M198 283V295M199 283V294M200 283V294M201 284V294M202 283V294M203 283V293M204 283V295M205 284V294M206 283V294M207 283V295M208 283V294M209 283V294M210 283V294M211 283V295M212 283V294M213 283V294M214 283V294M215 283V294M216 283V294M217 284V294M218 283V293M219 283V294M220 283V294M221 283V291M222 283V294M223 283V294M224 283V291M225 283V291M226 281V294M227 283V291M228 284V294M229 283V294M230 283V294M231 284V291M232 283V291M233 283V294M234 283V294M235 284V295M236 283V294M237 283V291M238 284V294M239 283V294M240 283V294M241 283V294M242 283V295M243 283V294M244 283V291M245 283V293M246 283V294M247 283V294M248 283V293M249 283V291M250 283V294M251 281V294M252 283V294M253 283V294M254 283V291M255 283V293M256 283V294M257 283V294M258 283V291M259 283V294M260 284V291M261 283V294M262 284V293M263 283V291M264 283V295M265 283V291M266 283V291M267 283V295M268 283V295M269 283V291M270 283V294M271 283V294M272 283V294M273 283V293M274 283V293M275 283V295M276 281V295M277 283V293M278 283V293M279 283V294M280 283V291M281 283V294M282 283V293M283 283V293M284 283V294M285 283V294M286 283V294M287 284V294M288 283V293M289 283V294M290 283V294M291 283V294M292 283V291M293 283V294M294 283V295M295 283V294M296 283V291M297 283V291M298 283V294M299 283V294M300 283V293M301 283V293M302 283V294M303 283V295M304 283V291M305 283V291M306 283V294M307 283V294M308 283V294M309 284V294M310 284V291M311 283V294M312 283V294M313 283V294M314 283V291M315 283V291M316 283V294M317 283V294M318 283V291M319 283V291M320 283V291M321 284V291M322 283V291M323 283V294M324 283V294M325 283V294M326 283V291M327 283V294M328 283V294M329 283V293M330 283V294M331 283V294M332 284V293M333 283V294M334 284V294M335 284V294M336 284V294M337 283V294M338 284V291M339 283V294M340 283V295M341 284V294M342 283V291M343 283V293M344 284V295M345 284V294M346 283V294M347 283V294M348 283V291M349 283V291M350 283V291M351 283V294M352 283V291M353 283V294M354 281V295M355 283V293M356 284V291M357 283V294M358 283V291M359 283V291M360 283V291M361 283V294M362 285V293M363 285V293M364 285V295M365 285V293M366 286V293M367 285V293M368 286V293M369 285V296M370 285V296M371 285V296M372 286V296M373 285V295M374 285V297M375 285V293M376 285V297M377 285V296M378 285V297M379 285V293M380 285V296M381 285V296M382 285V293M383 285V293M384 285V293M385 280V292M386 280V288M387 281V291M388 280V291M389 280V288M390 281V288M391 280V291M416 291V301M417 290V300M418 288V300M419 288V299M420 288V298M421 286V296M422 286V296M423 286V294M424 285V296M425 285V293M426 285V296M427 285V296M428 285V293M429 285V296M430 285V296M431 286V296M432 285V295M433 284V292M434 284V295M435 284V295M436 285V292M437 284V295M438 284V295M439 284V295M440 284V292M441 284V295M442 284V294M443 284V292M444 284V295M445 283V292M446 284V292M447 285V295M448 284V292M449 284V295M450 284V295M451 285V294M452 283V295M453 284V292M454 283V291M455 283V293M456 283V294M457 283V294M458 283V294M459 283V294M460 281V294M461 283V291M462 283V293M463 283V294M464 283V294M465 283V294M466 284V293M467 283V291M491 261V277M492 263V278M493 264V278M494 264V279M495 267V279M496 266V276M497 268V278M498 267V279M499 268V280M500 269V277M501 268V277M502 269V277M503 269V282M504 269V278M505 270V281M506 270V281M507 271V282M508 271V279M509 271V283M510 271V283M511 271V279M512 271V282M513 271V279M514 271V279M515 271V282M516 271V282M517 273V279M518 272V283M519 272V280M520 272V280M521 272V283M522 272V280M523 272V283M524 272V283M525 272V283M526 272V283M527 272V282M528 272V284M529 272V283M530 272V283M531 272V280M532 272V283M533 272V283M534 272V284M535 272V283M536 272V283M537 272V283M538 272V283M539 272V280M540 272V283M541 272V283M542 272V283M543 272V283M544 272V282M545 273V283M546 273V282M547 273V280M548 273V282M549 273V283M550 273V282M551 273V283M552 273V280M553 273V283M554 273V285M555 271V284M556 272V284M557 273V285M558 273V285M559 274V284M560 274V285M561 273V284M562 273V284M563 273V285M564 273V284M565 273V284M566 273V281M567 274V281M568 273V281M569 273V281M570 273V283M571 273V284M572 273V284M573 273V284M574 273V284M575 273V284M576 273V284M577 273V284M578 273V281M579 273V285M580 273V283M581 273V284M582 274V284M583 273V281M584 273V284M585 273V281M586 273V284M587 273V284M588 273V284M589 273V284M590 273V284M591 273V284M592 273V284M593 273V285M594 273V281M595 274V281M596 273V284M597 273V284M598 272V283M599 274V284M600 273V283M601 273V281M602 273V284M603 273V284M604 274V284M605 273V283M606 273V281M607 273V281M608 273V283M609 273V284M610 273V281M611 273V281M612 273V281M613 273V284M614 273V284M615 273V285M616 273V285M617 272V285M618 273V281M619 273V281M620 273V285M621 273V285M622 273V284M623 273V284M624 273V284M625 273V284M626 273V284M627 274V284M628 274V281M629 273V284M630 273V281M631 273V284M632 274V281M633 273V281M634 273V284M635 273V284M636 274V284M637 273V284M638 274V281M639 273V281M640 273V281M641 273V285M642 273V281M643 273V284M644 274V281M645 273V285M646 273V284M647 273V281M648 273V284M649 271V284M650 273V281M651 273V281M652 273V281M653 273V281M654 273V281M655 273V284M656 273V283M657 273V281M658 273V281M659 273V285M660 273V285M661 274V281M662 272V285M663 273V284M664 273V281M665 274V284M666 273V284"/><path transform="translate(.5 0)" stroke="#ffd000" d="M25 284V291M26 284V291M27 284V291M28 284V291M29 284V291M30 284V291M31 284V291M32 284V291M33 284V291M34 284V291M35 284V291M36 284V291M37 284V291M38 284V291M39 284V291M40 284V291M41 284V291M42 284V291M43 284V291M44 284V291M45 284V291M46 284V291M47 284V291M48 284V291M49 284V291M50 284V291M51 284V291M52 284V291M53 284V291M54 284V291M55 284V291M56 284V291M57 284V291M58 284V291M59 284V291M60 284V291M61 284V291M62 284V291M63 284V291M64 284V291M65 284V291M66 284V291M67 284V291M68 284V291M69 284V291M70 284V291M71 284V291M72 284V291M73 284V291M74 284V291M75 284V291M76 284V291M77 284V291M78 284V291M79 284V291M80 284V291M81 284V291M82 284V291M83 284V291M84 284V291M85 284V291M86 284V291M87 284V291M88 284V291M89 284V291M90 284V291M91 284V291M92 284V291M93 284V291M94 284V291M95 284V291M96 284V291M97 284V291M98 284V291M99 284V291M100 284V291M101 284V291M102 284V291M103 284V291M104 284V291M105 284V291M106 284V291M107 284V291M108 284V291M109 284V291M110 284V291M111 284V291M112 284V291M113 284V291M114 284V291M115 284V291M116 284V291M117 284V291M118 284V291M119 284V291M120 284V291M121 284V291M122 284V291M123 284V291M124 284V291M125 284V291M126 284V291M127 284V291M128 284V291M129 284V291M130 284V291M131 284V291M132 284V291M133 284V291M134 284V291M135 284V291M136 284V291M137 284V291M138 284V291M139 284V291M140 284V291M141 284V291M142 284V291M143 284V291M144 284V291M145 284V291M146 284V291M147 284V291M148 284V291M149 284V291M150 284V291M151 284V291M152 284V291M153 284V291M154 284V291M155 284V291M156 284V291M157 284V291M158 284V291M159 284V291M160 284V291M161 284V291M162 284V291M163 284V291M164 284V291M165 284V291M166 284V291M167 284V291M168 284V291M169 284V291M170 284V291M171 284V291M172 284V291M173 284V291M174 284V291M175 284V291M176 284V291M177 284V291M178 284V291M179 284V291M180 284V291M181 284V291M182 284V291M183 284V291M184 284V291M185 284V291M186 284V291M187 284V291M188 284V291M189 284V291M190 284V291M191 284V291M192 284V291M193 284V291M194 284V291M195 284V291M196 284V291M197 284V291M198 284V291M199 284V291M200 284V291M201 284V291M202 284V291M203 284V291M204 284V291M205 284V291M206 284V291M207 284V291M208 284V291M209 284V291M210 284V291M211 284V291M212 284V291M213 284V291M214 284V291M215 284V291M216 284V291M217 284V291M218 284V291M219 284V291M220 284V291M221 284V291M222 284V291M223 284V291M224 284V291M225 284V291M226 284V291M227 284V291M228 284V291M229 284V291M230 284V291M231 284V291M232 284V291M233 284V291M234 284V291M235 284V291M236 284V291M237 284V291M238 284V291M239 284V291M240 284V291M241 284V291M242 284V291M243 284V291M244 284V291M245 284V291M246 284V291M247 284V291M248 284V291M249 284V291M250 284V291M251 284V291M252 284V291M253 284V291M254 284V291M255 284V291M256 284V291M257 284V291M258 284V291M259 284V291M260 284V291M261 284V291M262 284V291M263 284V291M264 284V291M265 284V291M266 284V291M267 284V291M268 284V291M269 284V291M270 284V291M271 284V291M272 284V291M273 284V291M274 284V291M275 284V291M276 284V291M277 284V291M278 284V291M279 284V291M280 284V291M281 284V291M282 284V291M283 284V291M284 284V291M285 284V291M286 284V291M287 284V291M288 284V291M289 284V291M290 284V291M291 284V291M292 284V291M293 284V291M294 284V291M295 284V291M296 284V291M297 284V291M298 284V291M299 284V291M300 284V291M301 284V291M302 284V291M303 284V291M304 284V291M305 284V291M306 284V291M307 284V291M308 284V291M309 284V291M310 284V291M311 284V291M312 284V291M313 284V291M314 284V291M315 284V291M316 284V291M317 284V291M318 284V291M319 284V291M320 284V291M321 284V291M322 284V291M323 284V291M324 284V291M325 284V291M326 284V291M327 284V291M328 284V291M329 284V291M330 284V291M331 284V291M332 284V291M333 284V291M334 284V291M335 284V291M336 284V291M337 284V291M338 284V291M339 284V291M340 284V291M341 284V291M342 284V291M343 284V291M344 284V291M345 284V291M346 284V291M347 284V291M348 284V291M349 284V291M350 284V291M351 284V291M352 284V291M353 284V291M354 284V291M355 284V291M356 284V291M357 284V291M358 284V291M359 284V291M360 284V291M361 284V291M362 286V293M363 286V293M364 286V293M365 286V293M366 286V293M367 286V293M368 286V293M369 286V293M370 286V293M371 286V293M372 286V293M373 286V293M374 286V293M375 286V293M376 286V293M377 286V293M378 286V293M379 286V293M380 286V293M381 286V293M382 286V293M383 286V293M384 286V293M385 281V288M386 281V288M387 281V288M388 281V288M389 281V288M390 281V288M391 281V288M416 292V301M417 291V298M418 289V297M419 289V296M420 288V295M421 287V294M422 287V294M423 287V294M424 286V293M425 286V293M426 286V293M427 286V293M428 286V293M429 286V293M430 286V293M431 286V293M432 286V293M433 285V292M434 285V292M435 285V292M436 285V292M437 285V292M438 285V292M439 285V292M440 285V292M441 285V292M442 285V292M443 285V292M444 285V292M445 285V292M446 285V292M447 285V292M448 285V292M449 285V292M450 285V292M451 285V292M452 285V292M453 285V292M454 284V291M455 284V291M456 284V291M457 284V291M458 284V291M459 284V291M460 284V291M461 284V291M462 284V291M463 284V291M464 284V291M465 284V291M466 284V291M467 284V291M491 262V275M492 263V275M493 265V275M494 265V275M495 267V276M496 267V276M497 268V276M498 268V277M499 269V277M500 269V277M501 269V277M502 270V277M503 270V278M504 270V278M505 271V278M506 271V278M507 271V279M508 272V279M509 272V279M510 272V279M511 272V279M512 272V279M513 272V279M514 272V279M515 272V279M516 272V279M517 273V279M518 273V280M519 273V280M520 273V280M521 273V280M522 273V280M523 273V280M524 273V280M525 273V280M526 273V280M527 273V280M528 273V280M529 273V280M530 273V280M531 273V280M532 273V280M533 273V280M534 273V280M535 273V280M536 273V280M537 273V280M538 273V280M539 273V280M540 273V280M541 273V280M542 273V280M543 273V280M544 273V280M545 274V280M546 274V280M547 274V280M548 274V280M549 274V280M550 274V280M551 274V280M552 274V280M553 274V280M554 274V281M555 274V281M556 274V281M557 274V281M558 274V281M559 274V281M560 274V281M561 274V281M562 274V281M563 274V281M564 274V281M565 274V281M566 274V281M567 274V281M568 274V281M569 274V281M570 274V281M571 274V281M572 274V281M573 274V281M574 274V281M575 274V281M576 274V281M577 274V281M578 274V281M579 274V281M580 274V281M581 274V281M582 274V281M583 274V281M584 274V281M585 274V281M586 274V281M587 274V281M588 274V281M589 274V281M590 274V281M591 274V281M592 274V281M593 274V281M594 274V281M595 274V281M596 274V281M597 274V281M598 274V281M599 274V281M600 274V281M601 274V281M602 274V281M603 274V281M604 274V281M605 274V281M606 274V281M607 274V281M608 274V281M609 274V281M610 274V281M611 274V281M612 274V281M613 274V281M614 274V281M615 274V281M616 274V281M617 274V281M618 274V281M619 274V281M620 274V281M621 274V281M622 274V281M623 274V281M624 274V281M625 274V281M626 274V281M627 274V281M628 274V281M629 274V281M630 274V281M631 274V281M632 274V281M633 274V281M634 274V281M635 274V281M636 274V281M637 274V281M638 274V281M639 274V281M640 274V281M641 274V281M642 274V281M643 274V281M644 274V281M645 274V281M646 274V281M647 274V281M648 274V281M649 274V281M650 274V281M651 274V281M652 274V281M653 274V281M654 274V281M655 274V281M656 274V281M657 274V281M658 274V281M659 274V281M660 274V281M661 274V281M662 274V281M663 274V281M664 274V281M665 274V281M666 274V281"/></g>
<g fill="none" stroke-linecap="round" stroke-linejoin="round"><path d="M414.5 170V304" stroke="#c09800" stroke-width="1"/><path d="M467.5 292V346" stroke="#b89000" stroke-width="1.1"/><path d="M490.5 262V398" stroke="#b89000" stroke-width="1.1"/><path d="M490.5 227V264" stroke="#dcae00" stroke-width="1.2"/><path d="M393 229 C393.3 220 394 212 394.6 207 C395.6 198 397 188 398.6 180 C399.8 175 401 171 403 167" stroke="#b08c00" stroke-width="2.8"/><path d="M393 229 C393.3 220 394 212 394.6 207 C395.6 198 397 188 398.6 180 C399.8 175 401 171 403 167" stroke="#ffd000" stroke-width="1.5"/><path d="M400.2 174 L401.6 167 L403.4 162.3 L406 160.3 L409 160 L412 160.8 L414 163 L415 166 V172 L413 170.5 L410 169.3 L407 169.2 L404.6 170.6 L403 173.5 L401.6 177 Z" fill="#b08c00"/><path d="M402.2 168.5 L404 164 L406.4 162.2 L409 161.8 L411.6 162.4 L413.4 164.4 L414.2 167 V169 L411 167.4 L407.4 167.2 L404.6 168.6 L402.8 171.5 Z" fill="#ffd000" stroke="#ffd000" stroke-width="1"/><path d="M467.8 344 C468.2 352 468.8 360 469.8 367 C471 376 472.6 384 475 390.5" stroke="#b08c00" stroke-width="2.8"/><path d="M467.8 344 C468.2 352 468.8 360 469.8 367 C471 376 472.6 384 475 390.5" stroke="#ffd000" stroke-width="1.5"/><path d="M471.6 383 L473.6 390 L476 394.2 L479 395.6 L483 395.4 L487 393.6 L489.4 390.5 L491 385.5 V397.5 L489 400.6 L486 403.2 L482.6 404.6 L479 403 L475.6 398.6 L472.8 392 L470.6 384 Z" fill="#b08c00"/><path d="M474 392.5 L476.4 395.8 L479.4 397.4 L483 397.2 L487 395.4 L489.6 392.4 L490.2 391 V396.4 L488 399.6 L485.4 401.6 L482.6 402.6 L479.6 401.2 L476.6 397.6 Z" fill="#ffd000" stroke="#ffd000" stroke-width="1"/></g>
<g fill="#9098a8" shape-rendering="crispEdges"><rect x="39" y="278" width="1" height="3"/><rect x="54" y="278" width="1" height="3"/><rect x="69" y="278" width="1" height="3"/><rect x="84" y="278" width="1" height="3"/><rect x="99" y="277" width="1" height="5"/><rect x="114" y="278" width="1" height="3"/><rect x="129" y="278" width="1" height="3"/><rect x="144" y="278" width="1" height="3"/><rect x="159" y="278" width="1" height="3"/><rect x="174" y="277" width="1" height="5"/><rect x="189" y="278" width="1" height="3"/><rect x="204" y="278" width="1" height="3"/><rect x="219" y="278" width="1" height="3"/><rect x="234" y="278" width="1" height="3"/><rect x="249" y="277" width="1" height="5"/><rect x="264" y="278" width="1" height="3"/><rect x="279" y="278" width="1" height="3"/><rect x="294" y="278" width="1" height="3"/><rect x="309" y="278" width="1" height="3"/><rect x="324" y="277" width="1" height="5"/><rect x="339" y="278" width="1" height="3"/><rect x="354" y="278" width="1" height="3"/><rect x="369" y="278" width="1" height="3"/><rect x="384" y="278" width="1" height="3"/><rect x="399" y="277" width="1" height="5"/><rect x="414" y="278" width="1" height="3"/><rect x="429" y="278" width="1" height="3"/><rect x="444" y="278" width="1" height="3"/><rect x="459" y="278" width="1" height="3"/><rect x="474" y="277" width="1" height="5"/><rect x="489" y="278" width="1" height="3"/><rect x="504" y="278" width="1" height="3"/><rect x="519" y="278" width="1" height="3"/><rect x="534" y="278" width="1" height="3"/><rect x="549" y="277" width="1" height="5"/><rect x="564" y="278" width="1" height="3"/><rect x="579" y="278" width="1" height="3"/><rect x="594" y="278" width="1" height="3"/><rect x="609" y="278" width="1" height="3"/><rect x="624" y="277" width="1" height="5"/><rect x="639" y="278" width="1" height="3"/><rect x="654" y="278" width="1" height="3"/><rect x="669" y="278" width="1" height="3"/><rect x="684" y="278" width="1" height="3"/><rect x="699" y="277" width="1" height="5"/><rect x="714" y="278" width="1" height="3"/><rect x="729" y="278" width="1" height="3"/><rect x="744" y="278" width="1" height="3"/><rect x="759" y="278" width="1" height="3"/></g>
<path d="M385.5 40H399.5L392.5 47Z" fill="#ffc000"/>
<path d="M393 40.5L399.5 47L406.5 40.5" fill="none" stroke="#ffb400" stroke-width="1.1"/>
<g fill="none" stroke="#fff000"><path d="M25 288.5H667" stroke-width="1" shape-rendering="crispEdges"/><path d="M415.5 40V479" stroke-width="1.5"/><path d="M25 158.5H667" stroke-width="1" stroke-dasharray="4 4" shape-rendering="crispEdges"/><path d="M392.5 39.8V479" stroke-width="1.5" stroke-dasharray="4.3 3.7"/></g>
<rect x="382.5" y="148.5" width="19" height="19" fill="none" stroke="#ffc000" stroke-width="1" shape-rendering="crispEdges"/>
<circle cx="415.5" cy="288.5" r="9" fill="none" stroke="#ffc000" stroke-width="1"/>
<g fill="#fff" stroke="#fff" stroke-width=".9" stroke-linejoin="miter" font-family="'Liberation Sans',sans-serif" font-weight="bold"><text x="23.4" y="21.2" font-size="16px" textLength="13.2" lengthAdjust="spacingAndGlyphs">G</text><text x="37.3" y="17.1" font-size="10.4px" textLength="12.2" lengthAdjust="spacingAndGlyphs">W</text><text x="52.6" y="21.2" font-size="16px" textLength="61" lengthAdjust="spacingAndGlyphs">INSTEK</text></g>
<rect x="37" y="19" width="12.7" height="2.8" fill="#e87000"/>
<rect x="249.5" y="7.5" width="300" height="25" fill="#000" stroke="#fff" stroke-width="1" shape-rendering="crispEdges"/>
<rect x="300" y="11" width="199" height="18" fill="none" stroke="#d86800" stroke-width="2" shape-rendering="crispEdges"/>
<path d="M302.0 19.49 L303.0 20.36 L304.0 21.27 L305.0 22.17 L306.0 22.98 L307.0 23.66 L308.0 24.16 L309.0 24.44 L310.0 24.49 L311.0 24.30 L312.0 23.88 L313.0 23.27 L314.0 22.51 L315.0 21.64 L316.0 20.73 L317.0 19.83 L318.0 19.02 L319.0 18.34 L320.0 17.84 L321.0 17.56 L322.0 17.51 L323.0 17.70 L324.0 18.12 L325.0 18.73 L326.0 19.49 L327.0 20.36 L328.0 21.27 L329.0 22.17 L330.0 22.98 L331.0 23.66 L332.0 24.16 L333.0 24.44 L334.0 24.49 L335.0 24.30 L336.0 23.88 L337.0 23.27 L338.0 22.51 L339.0 21.64 L340.0 20.73 L341.0 19.83 L342.0 19.02 L343.0 18.34 L344.0 17.84 L345.0 17.56 L346.0 17.51 L347.0 17.70 L348.0 18.12 L349.0 18.73 L350.0 19.49 L351.0 20.36 L352.0 21.27 L353.0 22.17 L354.0 22.98 L355.0 23.66 L356.0 24.16 L357.0 24.44 L358.0 24.49 L359.0 24.30 L360.0 23.88 L361.0 23.27 L362.0 22.51 L363.0 21.64 L364.0 20.73 L365.0 19.83 L366.0 19.02 L367.0 18.34 L368.0 17.84 L369.0 17.56 L370.0 17.51 L371.0 17.70 L372.0 18.12 L373.0 18.73 L374.0 19.49 L375.0 20.36 L376.0 21.27 L377.0 22.17 L378.0 22.98 L379.0 23.66 L380.0 24.16 L381.0 24.44 L382.0 24.49 L383.0 24.30 L384.0 23.88 L385.0 23.27 L386.0 22.51 L387.0 21.64 L388.0 20.73 L389.0 19.83 L390.0 19.02 L391.0 18.34 L392.0 17.84 L393.0 17.56 L394.0 17.51 L395.0 17.70 L396.0 18.12 L397.0 18.73 L398.0 19.49 L399.0 20.36 L400.0 21.27 L401.0 22.17 L402.0 22.98 L403.0 23.66 L404.0 24.16 L405.0 24.44 L406.0 24.49 L407.0 24.30 L408.0 23.88 L409.0 23.27 L410.0 22.51 L411.0 21.64 L412.0 20.73 L413.0 19.83 L414.0 19.02 L415.0 18.34 L416.0 17.84 L417.0 17.56 L418.0 17.51 L419.0 17.70 L420.0 18.12 L421.0 18.73 L422.0 19.49 L423.0 20.36 L424.0 21.27 L425.0 22.17 L426.0 22.98 L427.0 23.66 L428.0 24.16 L429.0 24.44 L430.0 24.49 L431.0 24.30 L432.0 23.88 L433.0 23.27 L434.0 22.51 L435.0 21.64 L436.0 20.73 L437.0 19.83 L438.0 19.02 L439.0 18.34 L440.0 17.84 L441.0 17.56 L442.0 17.51 L443.0 17.70 L444.0 18.12 L445.0 18.73 L446.0 19.49 L447.0 20.36 L448.0 21.27 L449.0 22.17 L450.0 22.98 L451.0 23.66 L452.0 24.16 L453.0 24.44 L454.0 24.49 L455.0 24.30 L456.0 23.88 L457.0 23.27 L458.0 22.51 L459.0 21.64 L460.0 20.73 L461.0 19.83 L462.0 19.02 L463.0 18.34 L464.0 17.84 L465.0 17.56 L466.0 17.51 L467.0 17.70 L468.0 18.12 L469.0 18.73 L470.0 19.49 L471.0 20.36 L472.0 21.27 L473.0 22.17 L474.0 22.98 L475.0 23.66 L476.0 24.16 L477.0 24.44 L478.0 24.49 L479.0 24.30 L480.0 23.88 L481.0 23.27 L482.0 22.51 L483.0 21.64 L484.0 20.73 L485.0 19.83 L486.0 19.02 L487.0 18.34 L488.0 17.84 L489.0 17.56 L490.0 17.51 L491.0 17.70 L492.0 18.12 L493.0 18.73 L494.0 19.49 L495.0 20.36 L496.0 21.27 L497.0 22.17" fill="none" stroke="#e8b800" stroke-width="1.1"/>
<path d="M394.6 8H400.6L397.6 14.2Z" fill="#20e8f8"/>
<rect x="558.5" y="7.5" width="49" height="25" rx="5" fill="none" stroke="#d8f020" stroke-width="1.2"/>
<text x="583.2" y="24.2" text-anchor="middle" font-family="'Liberation Sans',sans-serif" font-weight="bold" font-size="14.6px" letter-spacing=".4px" fill="#e0f820">Trig'd</text>
<rect x="617.5" y="7.5" width="37" height="25" rx="5" fill="none" stroke="#58f0b0" stroke-width="1.2"/>
<path d="M624 25.5H628.5V14.5L630 13.5L632 14.8L634 13.5L636 14.8L638 13.5L640 14.8L642 13.5L643.5 14.5V25.5H648" fill="none" stroke="#58f0b0" stroke-width="2.1" stroke-linejoin="miter"/>
<rect x="669.5" y="2.5" width="105" height="35" rx="5" fill="#000" stroke="#fff" stroke-width="1.2"/>
<text class="m" xml:space="preserve" x="677" y="16.6" fill="#fff">20 Nov 2019</text>
<text class="m" xml:space="preserve" x="697" y="32.7" fill="#fff" textLength="68" lengthAdjust="spacing">21:46:29</text>
<rect x="25.5" y="48.5" width="203" height="61.5" rx="6" fill="none" stroke="#fff" stroke-width="1.2"/>
<rect x="30.5" y="56.5" width="9" height="9" fill="none" stroke="#fff" stroke-width="1" shape-rendering="crispEdges"/>
<circle cx="35.5" cy="80.3" r="5.3" fill="none" stroke="#fff" stroke-width="1"/>
<path d="M45.5 104.5L50.3 95.3L55.2 104.5Z M137.5 104.5L142.5 95.3L147.5 104.5Z" fill="none" stroke="#fff" stroke-width="1"/>
<text class="m" xml:space="preserve" x="58" y="65" fill="#fff">50.0ns</text>
<text class="m" xml:space="preserve" x="158" y="65" fill="#fff">15.8V</text>
<text class="m" xml:space="preserve" x="58" y="84.6" fill="#fff">1.55us</text>
<text class="m" xml:space="preserve" x="158" y="84.6" fill="#fff">5.05V</text>
<text class="m" xml:space="preserve" x="58" y="104.4" fill="#fff">1.50us</text>
<text class="m" xml:space="preserve" x="158" y="104.4" fill="#fff">10.8V</text>
<rect x="643.5" y="458.5" width="128.5" height="19.3" rx="5" fill="#000" stroke="#fff" stroke-width="1"/>
<rect x="645.3" y="460.3" width="28" height="15.4" rx="4" fill="#fff"/>
<text x="657" y="473.7" text-anchor="middle" font-family="'Liberation Sans',sans-serif" font-weight="bold" font-size="16px" fill="#000">F</text>
<rect x="25.5" y="479.5" width="747" height="38" rx="6" fill="#000" stroke="#fff" stroke-width="1.2"/>
<defs><clipPath id="c1"><path d="M-7 -15H7V-2.3H2.0V1H-1.15V-2.3H-7Z"/></clipPath><clipPath id="c2"><path d="M-7 -15H7V-2.7H2.3V1H-1.75V-2.7H-7Z"/></clipPath></defs>
<circle cx="35.5" cy="490" r="7.2" fill="#ffcc00"/><g transform="translate(35.5 496.2) scale(1.0)"><text x="-0.4" y="0" clip-path="url(#c1)" text-anchor="middle" font-family="'Liberation Sans',sans-serif" font-weight="bold" font-size="18px" fill="#000" stroke="#000" stroke-width="0.4">1</text></g>
<text class="m" xml:space="preserve" x="44.6" y="494.6" fill="#ffcc00">Max  15.6V</text>
<circle cx="35.5" cy="509.3" r="7.2" fill="#ffcc00"/><g transform="translate(35.5 515.5) scale(1.0)"><text x="-0.4" y="0" clip-path="url(#c1)" text-anchor="middle" font-family="'Liberation Sans',sans-serif" font-weight="bold" font-size="18px" fill="#000" stroke="#000" stroke-width="0.4">1</text></g>
<text class="m" xml:space="preserve" x="44.6" y="513.9" fill="#ffcc00">Pk-Pk  20.0V</text>
<circle cx="221.5" cy="490" r="7.2" fill="#ffcc00"/><g transform="translate(221.5 496.2) scale(1.0)"><text x="-0.4" y="0" clip-path="url(#c1)" text-anchor="middle" font-family="'Liberation Sans',sans-serif" font-weight="bold" font-size="18px" fill="#000" stroke="#000" stroke-width="0.4">1</text></g>
<text class="m" xml:space="preserve" x="230.6" y="494.6" fill="#ffcc00">Min  -4.40V</text>
<circle cx="221.5" cy="509.3" r="7.2" fill="#ffcc00"/><g transform="translate(221.5 515.5) scale(1.0)"><text x="-0.4" y="0" clip-path="url(#c1)" text-anchor="middle" font-family="'Liberation Sans',sans-serif" font-weight="bold" font-size="18px" fill="#000" stroke="#000" stroke-width="0.4">1</text></g>
<text class="m" xml:space="preserve" x="230.6" y="513.9" fill="#ffcc00">Frequency  143.2kHz</text>
<circle cx="407.5" cy="490" r="7.2" fill="#ffcc00"/><g transform="translate(407.5 496.2) scale(1.0)"><text x="-0.4" y="0" clip-path="url(#c1)" text-anchor="middle" font-family="'Liberation Sans',sans-serif" font-weight="bold" font-size="18px" fill="#000" stroke="#000" stroke-width="0.4">1</text></g>
<text class="m" xml:space="preserve" x="416.6" y="494.6" fill="#ffcc00">RMS  7.88V</text>
<circle cx="593.5" cy="490" r="7.2" fill="#ffcc00"/><g transform="translate(593.5 496.2) scale(1.0)"><text x="-0.4" y="0" clip-path="url(#c1)" text-anchor="middle" font-family="'Liberation Sans',sans-serif" font-weight="bold" font-size="18px" fill="#000" stroke="#000" stroke-width="0.4">1</text></g>
<text class="m" xml:space="preserve" x="602.6" y="494.6" fill="#ffcc00">Average  5.18V</text>
<rect x="2.5" y="521.5" width="417" height="19" rx="6" fill="#000" stroke="#fff" stroke-width="1.2"/>
<rect x="425.5" y="521.5" width="167" height="19" rx="6" fill="#000" stroke="#fff" stroke-width="1.2"/>
<rect x="598.5" y="521.5" width="176" height="38" rx="6" fill="#000" stroke="#fff" stroke-width="1.2"/>
<circle cx="10" cy="531.2" r="7.2" fill="#ffcc00"/><g transform="translate(10 537.4000000000001) scale(1.0)"><text x="-0.4" y="0" clip-path="url(#c1)" text-anchor="middle" font-family="'Liberation Sans',sans-serif" font-weight="bold" font-size="18px" fill="#000" stroke="#000" stroke-width="0.4">1</text></g>
<path d="M30 529H44M30 532h4.4m1.2 0h3.6m1 0h3.8" stroke="#ffcc00" stroke-width="2" fill="none"/>
<text class="m" xml:space="preserve" x="65" y="535.6" fill="#ffcc00">5V</text>
<circle cx="117" cy="531.2" r="7.2" fill="#424242"/><text x="117" y="536.8000000000001" text-anchor="middle" font-family="'Liberation Sans',sans-serif" font-weight="bold" font-size="16px" fill="#000">2</text>
<path d="M137 529H151M137 532h4.4m1.2 0h3.6m1 0h3.8" stroke="#424242" stroke-width="2" fill="none"/>
<text class="m" xml:space="preserve" x="172" y="535.6" fill="#424242">2V</text>
<circle cx="224" cy="531.2" r="7.2" fill="#424242"/><text x="224" y="536.8000000000001" text-anchor="middle" font-family="'Liberation Sans',sans-serif" font-weight="bold" font-size="16px" fill="#000">3</text>
<path d="M244 529H258M244 532h4.4m1.2 0h3.6m1 0h3.8" stroke="#424242" stroke-width="2" fill="none"/>
<text class="m" xml:space="preserve" x="279" y="535.6" fill="#424242">1V</text>
<circle cx="331" cy="531.2" r="7.2" fill="#424242"/><text x="331" y="536.8000000000001" text-anchor="middle" font-family="'Liberation Sans',sans-serif" font-weight="bold" font-size="16px" fill="#000">4</text>
<path d="M351 529H365M351 532h4.4m1.2 0h3.6m1 0h3.8" stroke="#424242" stroke-width="2" fill="none"/>
<text class="m" xml:space="preserve" x="386" y="535.6" fill="#424242">1V</text>
<text class="m" xml:space="preserve" x="457" y="535.6" fill="#fff">5us</text>
<rect x="499" y="523.8" width="14.2" height="14.4" rx="3.2" fill="#fff"/>
<text x="506.1" y="536" text-anchor="middle" font-family="'Liberation Sans',sans-serif" font-weight="bold" font-size="13.8px" fill="#000">H</text>
<text class="m" xml:space="preserve" x="527" y="535.6" fill="#fff">500.0ns</text>
<circle cx="629" cy="531.5" r="7.2" fill="#ffcc00"/><g transform="translate(629 537.7) scale(1.0)"><text x="-0.4" y="0" clip-path="url(#c1)" text-anchor="middle" font-family="'Liberation Sans',sans-serif" font-weight="bold" font-size="18px" fill="#000" stroke="#000" stroke-width="0.4">1</text></g>
<path d="M654.5 537.5H658.5V525.5H662.5M655.5 532.5L658.5 528.5L661.5 532.5" fill="none" stroke="#ffcc00" stroke-width="1.1"/>
<text class="m" xml:space="preserve" x="680.5" y="535.6" fill="#ffcc00">9.40V</text>
<path d="M3.5 342.5H18.5L22.5 348.5L18.5 354.5H3.5Z" fill="#ffd000" stroke="#101830" stroke-width="1"/>
<g transform="translate(12.9 353.3) scale(0.74)"><text x="-0.4" y="0" clip-path="url(#c2)" text-anchor="middle" font-family="'Liberation Sans',sans-serif" font-weight="bold" font-size="18px" fill="#000" stroke="#000" stroke-width="1.0">1</text></g>
<rect x="666.5" y="50.5" width="132.5" height="425" rx="5" fill="#306cb0" stroke="#d87010" stroke-width="1.2"/>
<rect x="670" y="53" width="126" height="30" rx="4.5" fill="#000018"/><rect x="671" y="53" width="125" height="29" rx="4.5" fill="#000080"/><rect x="671" y="55" width="123" height="27" rx="3.5" fill="#2454d8"/><rect x="672" y="55" width="122" height="26" rx="3.0" fill="#6cdcdc"/><rect x="673" y="55" width="121" height="25" rx="3.0" fill="#e4ffff"/><rect x="673" y="56" width="120" height="24" rx="2.5" fill="#3399cc"/>
<rect x="670" y="86" width="126" height="75" rx="4.5" fill="#000018"/><rect x="671" y="86" width="125" height="74" rx="4.5" fill="#000080"/><rect x="671" y="88" width="123" height="72" rx="3.5" fill="#2454d8"/><rect x="672" y="88" width="122" height="71" rx="3.0" fill="#6cdcdc"/><rect x="673" y="88" width="121" height="70" rx="3.0" fill="#e4ffff"/><rect x="673" y="89" width="120" height="69" rx="2.5" fill="#3399cc"/>
<rect x="670" y="164" width="126" height="75" rx="4.5" fill="#000018"/><rect x="671" y="164" width="125" height="74" rx="4.5" fill="#000080"/><rect x="671" y="166" width="123" height="72" rx="3.5" fill="#2454d8"/><rect x="672" y="166" width="122" height="71" rx="3.0" fill="#6cdcdc"/><rect x="673" y="166" width="121" height="70" rx="3.0" fill="#e4ffff"/><rect x="673" y="167" width="120" height="69" rx="2.5" fill="#3399cc"/>
<rect x="670" y="242" width="126" height="75" rx="4.5" fill="#000018"/><rect x="671" y="242" width="125" height="74" rx="4.5" fill="#000080"/><rect x="671" y="244" width="123" height="72" rx="3.5" fill="#2454d8"/><rect x="672" y="244" width="122" height="71" rx="3.0" fill="#6cdcdc"/><rect x="673" y="244" width="121" height="70" rx="3.0" fill="#e4ffff"/><rect x="673" y="245" width="120" height="69" rx="2.5" fill="#3399cc"/>
<rect x="670" y="320" width="126" height="75" rx="4.5" fill="#000018"/><rect x="671" y="320" width="125" height="74" rx="4.5" fill="#000080"/><rect x="671" y="322" width="123" height="72" rx="3.5" fill="#2454d8"/><rect x="672" y="322" width="122" height="71" rx="3.0" fill="#6cdcdc"/><rect x="673" y="322" width="121" height="70" rx="3.0" fill="#e4ffff"/><rect x="673" y="323" width="120" height="69" rx="2.5" fill="#3399cc"/>
<rect x="670" y="398" width="126" height="75" rx="4.5" fill="#000018"/><rect x="671" y="398" width="125" height="74" rx="4.5" fill="#000080"/><rect x="671" y="400" width="123" height="72" rx="3.5" fill="#2454d8"/><rect x="672" y="400" width="122" height="71" rx="3.0" fill="#6cdcdc"/><rect x="673" y="400" width="121" height="70" rx="3.0" fill="#e4ffff"/><rect x="673" y="401" width="120" height="69" rx="2.5" fill="#3399cc"/>
<rect x="713" y="127" width="42" height="19" rx="4" fill="#ccffff"/>
<rect x="744" y="205" width="32.5" height="19" rx="4" fill="#ccffff"/>
<rect x="16" y="541.5" width="110" height="57.8" rx="4.5" fill="#000018"/><rect x="17" y="541.5" width="109" height="56.8" rx="4.5" fill="#000080"/><rect x="17" y="543.5" width="107" height="54.8" rx="3.5" fill="#2454d8"/><rect x="18" y="543.5" width="106" height="53.8" rx="3.0" fill="#33ffff"/><rect x="19" y="543.5" width="105" height="52.8" rx="3.0" fill="#33ffff"/><rect x="19" y="544.5" width="104" height="51.8" rx="2.5" fill="#33ffff"/>
<rect x="128" y="541.5" width="110" height="57.8" rx="4.5" fill="#000018"/><rect x="129" y="541.5" width="109" height="56.8" rx="4.5" fill="#000080"/><rect x="129" y="543.5" width="107" height="54.8" rx="3.5" fill="#2454d8"/><rect x="130" y="543.5" width="106" height="53.8" rx="3.0" fill="#6cdcdc"/><rect x="131" y="543.5" width="105" height="52.8" rx="3.0" fill="#e4ffff"/><rect x="131" y="544.5" width="104" height="51.8" rx="2.5" fill="#3399cc"/>
<rect x="240" y="541.5" width="110" height="57.8" rx="4.5" fill="#000018"/><rect x="241" y="541.5" width="109" height="56.8" rx="4.5" fill="#000080"/><rect x="241" y="543.5" width="107" height="54.8" rx="3.5" fill="#2454d8"/><rect x="242" y="543.5" width="106" height="53.8" rx="3.0" fill="#6cdcdc"/><rect x="243" y="543.5" width="105" height="52.8" rx="3.0" fill="#e4ffff"/><rect x="243" y="544.5" width="104" height="51.8" rx="2.5" fill="#3399cc"/>
<rect x="352" y="541.5" width="110" height="57.8" rx="4.5" fill="#000018"/><rect x="353" y="541.5" width="109" height="56.8" rx="4.5" fill="#000080"/><rect x="353" y="543.5" width="107" height="54.8" rx="3.5" fill="#2454d8"/><rect x="354" y="543.5" width="106" height="53.8" rx="3.0" fill="#6cdcdc"/><rect x="355" y="543.5" width="105" height="52.8" rx="3.0" fill="#e4ffff"/><rect x="355" y="544.5" width="104" height="51.8" rx="2.5" fill="#3399cc"/>
<rect x="464" y="541.5" width="110" height="57.8" rx="4.5" fill="#000018"/><rect x="465" y="541.5" width="109" height="56.8" rx="4.5" fill="#000080"/><rect x="465" y="543.5" width="107" height="54.8" rx="3.5" fill="#2454d8"/><rect x="466" y="543.5" width="106" height="53.8" rx="3.0" fill="#6cdcdc"/><rect x="467" y="543.5" width="105" height="52.8" rx="3.0" fill="#e4ffff"/><rect x="467" y="544.5" width="104" height="51.8" rx="2.5" fill="#3399cc"/>
<rect x="576" y="541.5" width="110" height="57.8" rx="4.5" fill="#000018"/><rect x="577" y="541.5" width="109" height="56.8" rx="4.5" fill="#000080"/><rect x="577" y="543.5" width="107" height="54.8" rx="3.5" fill="#2454d8"/><rect x="578" y="543.5" width="106" height="53.8" rx="3.0" fill="#6cdcdc"/><rect x="579" y="543.5" width="105" height="52.8" rx="3.0" fill="#e4ffff"/><rect x="579" y="544.5" width="104" height="51.8" rx="2.5" fill="#3399cc"/>
<text class="s" x="51.13" y="566.1" textLength="37.40" lengthAdjust="spacing">Save</text>
<text class="s" x="46.68" y="587.4" textLength="45.87" lengthAdjust="spacing">Image</text>
<text class="s" x="163.49" y="566.1" textLength="37.03" lengthAdjust="spacing">Save</text>
<text class="s" x="146.92" y="587.1" textLength="76.32" lengthAdjust="spacing">Waveform</text>
<text class="s" x="275.49" y="566.1" textLength="37.03" lengthAdjust="spacing">Save</text>
<text class="s" x="272.16" y="587.1" textLength="44.33" lengthAdjust="spacing">Setup</text>
<text class="s" x="381.97" y="565.8" textLength="46.90" lengthAdjust="spacing">Recall</text>
<text class="s" x="370.92" y="587.1" textLength="76.32" lengthAdjust="spacing">Waveform</text>
<text class="s" x="493.97" y="565.8" textLength="46.90" lengthAdjust="spacing">Recall</text>
<text class="s" x="496.99" y="587.1" textLength="44.54" lengthAdjust="spacing">Setup</text>
<text class="s" x="614.97" y="564.3" textLength="29.16" lengthAdjust="spacing">Edit</text>
<text class="s" x="594.35" y="586.6" textLength="72.51" lengthAdjust="spacing">File Label</text>
<text class="s" x="689.21" y="73.5" textLength="87.51" lengthAdjust="spacing">Save Image</text>
<text class="s" x="690.15" y="116.5" textLength="83.86" lengthAdjust="spacing">File Format</text>
<text class="s" x="718.77" y="141.1" textLength="31.30" lengthAdjust="spacingAndGlyphs">Png</text>
<text class="s" x="696.35" y="195.4" textLength="70.52" lengthAdjust="spacing">Ink Saver</text>
<text class="s" x="695.61" y="220.4" textLength="20.80" lengthAdjust="spacing">On</text>
<text class="s" x="747.13" y="220.4" textLength="23.31" lengthAdjust="spacingAndGlyphs">Off</text>
<text class="s" x="694.21" y="362.5" textLength="76.26" lengthAdjust="spacing">Save Now</text>
<text class="s" x="688.64" y="440.75" textLength="86.76" lengthAdjust="spacing">File Utilities</text>
</svg>
</body></html>
